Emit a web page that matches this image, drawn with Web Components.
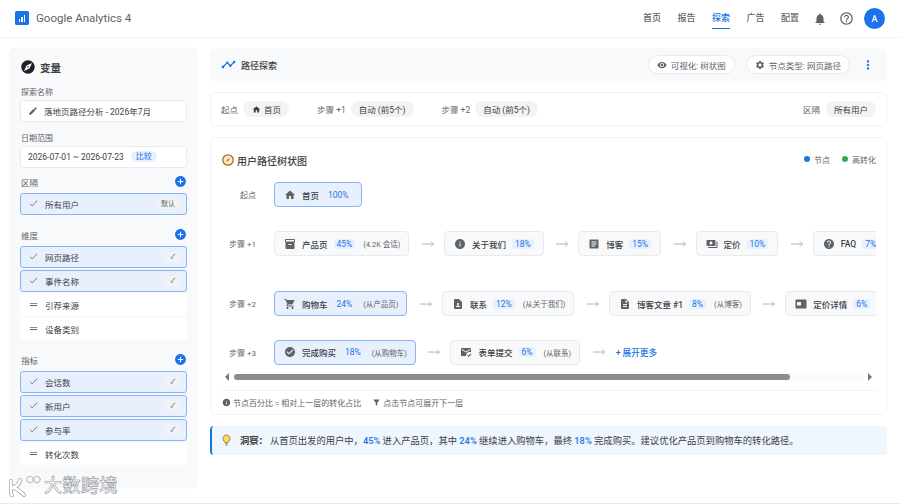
<!DOCTYPE html>
<html lang="zh">
<head>
<meta charset="utf-8">
<title>Google Analytics 4</title>
<style>
html, body { margin: 0; height: 100%; }
body {
    width: 900px; height: 504px; overflow: hidden; position: relative;
    background: #fff; color: #3c4043;
    font-family: Roboto, "Noto Sans CJK SC", sans-serif;
}
</style>
</head>
<body>
<ga-app>
    <ga-header></ga-header>
    <ga-sidebar>
        <ga-field label="探索名称" icon="edit">落地页路径分析 - 2026年7月</ga-field>
        <ga-field label="日期范围" tag="比较" style="margin-bottom:7px">2026-07-01 ~ 2026-07-23</ga-field>

        <ga-group label="区隔" add>
            <ga-chip on badge="默认">所有用户</ga-chip>
        </ga-group>
        <ga-group label="维度" add>
            <ga-chip on badge="✓">网页路径</ga-chip>
            <ga-chip on badge="✓">事件名称</ga-chip>
            <ga-chip>引荐来源</ga-chip>
            <ga-chip>设备类别</ga-chip>
        </ga-group>
        <ga-group label="指标" add>
            <ga-chip on badge="✓">会话数</ga-chip>
            <ga-chip on badge="✓">新用户</ga-chip>
            <ga-chip on badge="✓">参与率</ga-chip>
            <ga-chip>转化次数</ga-chip>
        </ga-group>
    </ga-sidebar>
    <ga-main>
        <ga-topbar></ga-topbar>
        <ga-filters></ga-filters>
        <ga-tree>
            <ga-row label="起点" gap="0">
                <ga-node on icon="home" pct="100%" plain>首页</ga-node>
            </ga-row>
            <ga-row label="步骤 +1" gap="24">
                <ga-node icon="inventory" pct="45%" sub="(4.2K 会话)">产品页</ga-node>
                <ga-arrow></ga-arrow>
                <ga-node icon="info" pct="18%">关于我们</ga-node>
                <ga-arrow></ga-arrow>
                <ga-node icon="article" pct="15%">博客</ga-node>
                <ga-arrow></ga-arrow>
                <ga-node icon="payments" pct="10%">定价</ga-node>
                <ga-arrow></ga-arrow>
                <ga-node icon="help" pct="7%">FAQ</ga-node>
            </ga-row>
            <ga-row label="步骤 +2" gap="35">
                <ga-node on icon="cart" pct="24%" sub="(从产品页)">购物车</ga-node>
                <ga-arrow></ga-arrow>
                <ga-node icon="contact" pct="12%" sub="(从关于我们)">联系</ga-node>
                <ga-arrow></ga-arrow>
                <ga-node icon="description" pct="8%" sub="(从博客)">博客文章 #1</ga-node>
                <ga-arrow></ga-arrow>
                <ga-node icon="video" pct="6%">定价详情</ga-node>
            </ga-row>
            <ga-row label="步骤 +3" gap="23.5">
                <ga-node on icon="check_circle" pct="18%" sub="(从购物车)">完成购买</ga-node>
                <ga-arrow></ga-arrow>
                <ga-node icon="mail" pct="6%" sub="(从联系)">表单提交</ga-node>
                <ga-arrow></ga-arrow>
                <a class="more" style="color:#1a73e8;font-size:8.6px;font-weight:500;margin-left:1px;white-space:nowrap">+ 展开更多</a>
            </ga-row>
        </ga-tree>
        <ga-insight></ga-insight>
    </ga-main>
</ga-app>
<ga-watermark></ga-watermark>

<script>
// material icon paths, 24x24
const ICONS = {
    home: 'M10 20v-6h4v6h5v-8h3L12 3 2 12h3v8z',
    edit: 'M3 17.25V21h3.75L17.81 9.94l-3.75-3.75L3 17.25zM20.71 7.04a1 1 0 0 0 0-1.41l-2.34-2.34a1 1 0 0 0-1.41 0l-1.83 1.83 3.75 3.75 1.83-1.83z',
    check: 'M9 16.17 4.83 12l-.9.9L9 18 20.5 6.5l-.9-.9z',
    drag: 'M20 9H4v2h16V9zM4 15h16v-2H4v2z',
    add_circle: 'M12 2C6.48 2 2 6.48 2 12s4.48 10 10 10 10-4.48 10-10S17.52 2 12 2zm5 11h-4v4h-2v-4H7v-2h4V7h2v4h4v2z',
    explore: 'M12 10.9c-.61 0-1.1.49-1.1 1.1s.49 1.1 1.1 1.1c.61 0 1.1-.49 1.1-1.1s-.49-1.1-1.1-1.1zM12 2C6.48 2 2 6.48 2 12s4.48 10 10 10 10-4.48 10-10S17.52 2 12 2zm2.19 12.19L6 18l3.81-8.19L18 6l-3.81 8.19z',
    timeline: 'M23 8c0 1.1-.9 2-2 2-.18 0-.35-.02-.51-.07l-3.56 3.55c.05.16.07.34.07.52 0 1.1-.9 2-2 2s-2-.9-2-2c0-.18.02-.36.07-.52l-2.55-2.55c-.16.05-.34.07-.52.07s-.36-.02-.52-.07l-4.55 4.56c.05.16.07.33.07.51 0 1.1-.9 2-2 2s-2-.9-2-2 .9-2 2-2c.18 0 .35.02.51.07l4.56-4.55C8.02 9.36 8 9.18 8 9c0-1.1.9-2 2-2s2 .9 2 2c0 .18-.02.36-.07.52l2.55 2.55c.16-.05.34-.07.52-.07s.36.02.52.07l3.55-3.56C19.02 8.35 19 8.18 19 8c0-1.1.9-2 2-2s2 .9 2 2z',
    eye: 'M12 4.5C7 4.5 2.73 7.61 1 12c1.73 4.39 6 7.5 11 7.5s9.27-3.11 11-7.5c-1.73-4.39-6-7.5-11-7.5zM12 17c-2.76 0-5-2.24-5-5s2.24-5 5-5 5 2.24 5 5-2.24 5-5 5zm0-8c-1.66 0-3 1.34-3 3s1.34 3 3 3 3-1.34 3-3-1.34-3-3-3z',
    settings: 'M19.14 12.94c.04-.3.06-.61.06-.94 0-.32-.02-.64-.07-.94l2.03-1.58a.49.49 0 0 0 .12-.61l-1.92-3.32a.488.488 0 0 0-.59-.22l-2.39.96c-.5-.38-1.03-.7-1.62-.94l-.36-2.54a.484.484 0 0 0-.48-.41h-3.84c-.24 0-.43.17-.47.41l-.36 2.54c-.59.24-1.13.57-1.62.94l-2.39-.96c-.22-.08-.47 0-.59.22L2.74 8.87c-.12.21-.08.47.12.61l2.03 1.58c-.05.3-.09.63-.09.94s.02.64.07.94l-2.03 1.58a.49.49 0 0 0-.12.61l1.92 3.32c.12.22.37.29.59.22l2.39-.96c.5.38 1.03.7 1.62.94l.36 2.54c.05.24.24.41.48.41h3.84c.24 0 .44-.17.47-.41l.36-2.54c.59-.24 1.13-.56 1.62-.94l2.39.96c.22.08.47 0 .59-.22l1.92-3.32c.12-.22.07-.47-.12-.61l-2.01-1.58zM12 15.6c-1.98 0-3.6-1.62-3.6-3.6s1.62-3.6 3.6-3.6 3.6 1.62 3.6 3.6-1.62 3.6-3.6 3.6z',
    more: 'M12 8c1.1 0 2-.9 2-2s-.9-2-2-2-2 .9-2 2 .9 2 2 2zm0 2c-1.1 0-2 .9-2 2s.9 2 2 2 2-.9 2-2-.9-2-2-2zm0 6c-1.1 0-2 .9-2 2s.9 2 2 2 2-.9 2-2-.9-2-2-2z',
    bell: 'M12 22c1.1 0 2-.9 2-2h-4c0 1.1.89 2 2 2zm6-6v-5c0-3.07-1.64-5.64-4.5-6.32V4c0-.83-.67-1.5-1.5-1.5s-1.5.67-1.5 1.5v.68C7.63 5.36 6 7.92 6 11v5l-2 2v1h16v-1l-2-2z',
    help_o: 'M11 18h2v-2h-2v2zm1-16C6.48 2 2 6.48 2 12s4.48 10 10 10 10-4.48 10-10S17.52 2 12 2zm0 18c-4.41 0-8-3.59-8-8s3.59-8 8-8 8 3.59 8 8-3.59 8-8 8zm0-14c-2.21 0-4 1.79-4 4h2c0-1.1.9-2 2-2s2 .9 2 2c0 2-3 1.75-3 5h2c0-2.25 3-2.5 3-5 0-2.21-1.79-4-4-4z',
    inventory: 'M20 2H4c-1 0-2 .9-2 2v3.01c0 .72.43 1.34 1 1.69V20c0 1.1 1.1 2 2 2h14c.9 0 2-.9 2-2V8.7c.57-.35 1-.97 1-1.69V4c0-1.1-1-2-2-2zm-5 12H9v-2h6v2zm5-7H4V4l16-.02V7z',
    info: 'M12 2C6.48 2 2 6.48 2 12s4.48 10 10 10 10-4.48 10-10S17.52 2 12 2zm1 15h-2v-6h2v6zm0-8h-2V7h2v2z',
    article: 'M19 3H5c-1.1 0-2 .9-2 2v14c0 1.1.9 2 2 2h14c1.1 0 2-.9 2-2V5c0-1.1-.9-2-2-2zm-5 14H7v-2h7v2zm3-4H7v-2h10v2zm0-4H7V7h10v2z',
    payments: 'M19 14V6c0-1.1-.9-2-2-2H3c-1.1 0-2 .9-2 2v8c0 1.1.9 2 2 2h14c1.1 0 2-.9 2-2zm-9-1c-1.66 0-3-1.34-3-3s1.34-3 3-3 3 1.34 3 3-1.34 3-3 3zm13-6v11c0 1.1-.9 2-2 2H4v-2h17V7h2z',
    help: 'M12 2C6.48 2 2 6.48 2 12s4.48 10 10 10 10-4.48 10-10S17.52 2 12 2zm1 17h-2v-2h2v2zm2.07-7.75-.9.92C13.45 12.9 13 13.5 13 15h-2v-.5c0-1.1.45-2.1 1.17-2.83l1.24-1.26c.37-.36.59-.86.59-1.41 0-1.1-.9-2-2-2s-2 .9-2 2H8c0-2.21 1.79-4 4-4s4 1.79 4 4c0 .88-.36 1.68-.93 2.25z',
    cart: 'M7 18c-1.1 0-1.99.9-1.99 2S5.9 22 7 22s2-.9 2-2-.9-2-2-2zM1 2v2h2l3.6 7.59-1.35 2.45c-.16.28-.25.61-.25.96 0 1.1.9 2 2 2h12v-2H7.42c-.14 0-.25-.11-.25-.25l.03-.12.9-1.63h7.45c.75 0 1.41-.41 1.75-1.03l3.58-6.49A1.003 1.003 0 0 0 20 4H5.21l-.94-2H1zm16 16c-1.1 0-1.99.9-1.99 2s.89 2 1.99 2 2-.9 2-2-.9-2-2-2z',
    contact: 'M14 2H6c-1.1 0-1.99.9-1.99 2L4 20c0 1.1.89 2 1.99 2H18c1.1 0 2-.9 2-2V8l-6-6zm-2 8c1.1 0 2 .9 2 2s-.9 2-2 2-2-.9-2-2 .9-2 2-2zm4 8H8v-.57c0-.81.48-1.53 1.22-1.85a6.95 6.95 0 0 1 5.56 0A2.01 2.01 0 0 1 16 17.43V18z',
    description: 'M14 2H6c-1.1 0-1.99.9-1.99 2L4 20c0 1.1.89 2 1.99 2H18c1.1 0 2-.9 2-2V8l-6-6zm2 16H8v-2h8v2zm0-4H8v-2h8v2zm-3-5V3.5L18.5 9H13z',
    video: 'M21 3H3c-1.1 0-2 .9-2 2v14c0 1.1.9 2 2 2h18c1.1 0 2-.9 2-2V5c0-1.1-.9-2-2-2zm-9 12H4V8h8v7z',
    check_circle: 'M12 2C6.48 2 2 6.48 2 12s4.48 10 10 10 10-4.48 10-10S17.52 2 12 2zm-2 15-5-5 1.41-1.41L10 14.17l7.59-7.59L19 8l-9 9z',
    mail: 'M12 19c0-3.87 3.13-7 7-7 1.08 0 2.09.25 3 .68V6c0-1.1-.9-2-2-2H4c-1.1 0-2 .9-2 2v12c0 1.1.9 2 2 2h8.08c-.05-.33-.08-.66-.08-1zM4 6l8 5 8-5v2l-8 5-8-5V6zm13.34 16-3.54-3.54 1.41-1.41 2.12 2.12 4.24-4.24L23 16.34 17.34 22z',
    filter: 'M4.25 5.61C6.27 8.2 10 13 10 13v6c0 .55.45 1 1 1h2c.55 0 1-.45 1-1v-6s3.72-4.8 5.74-7.39A.998.998 0 0 0 18.95 4H5.04c-.83 0-1.3.95-.79 1.61z'
};

function svg(name, size, color) {
    return `<svg width="${size}" height="${size}" viewBox="0 0 24 24" fill="${color}" style="display:block;flex:none"><path d="${ICONS[name]}"/></svg>`;
}

function define(tag, render) {
    customElements.define(tag, class extends HTMLElement {
        constructor() {
            super();
            this.attachShadow({ mode: 'open' });
        }
        connectedCallback() {
            this.shadowRoot.innerHTML = render(this);
        }
    });
}

define('ga-app', () => `
    <style>
    :host { display: grid; grid-template-columns: 187px 677px; grid-template-rows: 38px 440px; column-gap: 13px; row-gap: 10px; padding-left: 10px; width: 900px; height: 504px; box-sizing: border-box; border-bottom: 1px solid #e8eaed; align-content: start; }
    </style>
    <slot></slot>`);

define('ga-header', () => `
    <style>
    :host { grid-column: 1 / 3; margin-left: -10px; width: 900px; height: 38px; box-sizing: border-box; display: flex; align-items: center; padding: 0 15px; border-bottom: 1px solid #f1f3f4; }
    .logo { width: 14px; height: 14px; background: #1a73e8; border-radius: 1.5px; display: flex; align-items: flex-end; justify-content: center; gap: 1px; padding-bottom: 3px; box-sizing: border-box; margin-top: -1px; }
    .logo i { width: 1.5px; background: #fff; display: block; }
    .name { font-size: 11.5px; color: #5f6368; margin-left: 7px; flex: 1; margin-top: -1px; }
    nav { display: flex; gap: 16.5px; font-size: 9px; color: #5f6368; font-weight: 500; }
    nav a { height: 21px; line-height: 20px; box-sizing: border-box; }
    nav a.on { color: #1a73e8; border-bottom: 1px solid #1a73e8; }
    .tools { display: flex; align-items: center; margin-left: 14px; }
    .av { width: 21px; height: 21px; border-radius: 50%; background: #1a73e8; color: #fff; font-size: 9px; font-weight: 500; display: flex; align-items: center; justify-content: center; margin-left: 10px; }
    </style>
    <div class="logo"><i style="height:3px"></i><i style="height:5px"></i><i style="height:7px"></i></div>
    <div class="name">Google Analytics 4</div>
    <nav><a>首页</a><a>报告</a><a class="on">探索</a><a>广告</a><a>配置</a></nav>
    <div class="tools">${svg('bell', 14, '#5f6368')}<span style="width:12px"></span>${svg('help_o', 15, '#5f6368')}<div class="av">A</div></div>`);

define('ga-sidebar', () => `
    <style>
    :host { display: block; background: #f8f9fa; border-radius: 6px; box-shadow: 0 0 1px rgba(60,64,67,.2); padding: 11px 10px 0; box-sizing: border-box; height: 440px; }
    h2 { margin: 0 0 12px 0; font-size: 10.5px; font-weight: 700; color: #3c4043; display: flex; align-items: center; gap: 4px; height: 16px; }
    </style>
    <h2>${svg('explore', 16, '#202124')}变量</h2>
    <slot></slot>`);

define('ga-field', el => `
    <style>
    :host { display: block; margin-bottom: 10.5px; }
    label { display: block; font-size: 8px; color: #5f6368; line-height: 11px; margin-bottom: 2px; padding-left: 1px; }
    .box { height: 22px; box-sizing: border-box; background: #fff; border: 1px solid #e8eaed; border-radius: 3px; display: flex; align-items: center; padding: 0 7px; font-size: 8.5px; color: #3c4043; gap: 6px; }
    .tag { background: #e8f0fe; color: #1a73e8; font-size: 8px; border-radius: 6px; padding: 0 5px; line-height: 11px; margin-left: 1px; }
    </style>
    <label>${el.getAttribute('label')}</label>
    <div class="box">${el.hasAttribute('icon') ? svg(el.getAttribute('icon'), 10, '#5f6368') : ''}<span><slot></slot></span>${el.hasAttribute('tag') ? `<span class="tag">${el.getAttribute('tag')}</span>` : ''}</div>`);

define('ga-group', el => `
    <style>
    :host { display: flex; flex-direction: column; gap: 1.5px; margin-bottom: 12.5px; }
    .head { display: flex; align-items: center; justify-content: space-between; font-size: 8.5px; color: #5f6368; height: 14px; margin-bottom: 2.5px; padding-left: 1px; }
    </style>
    <div class="head">${el.getAttribute('label')}${svg('add_circle', 13, '#1a73e8')}</div>
    <slot></slot>`);

define('ga-chip', el => {
    let on = el.hasAttribute('on');
    let badge = el.getAttribute('badge');
    return `
    <style>
    :host { display: flex; align-items: center; height: 22.5px; box-sizing: border-box; border-radius: 3px; padding: 0 6px 0 7px; font-size: 8.5px; color: #3c4043;
        background: ${on ? '#e8f0fe' : '#fff'}; border: 1px solid ${on ? '#8ab4f8' : '#fff'}; }
    .t { margin-left: 6px; flex: 1; }
    .b { background: #f1f3f4; color: #5f6368; font-size: 7px; border-radius: 5px; padding: 0 5px; line-height: 10px; }
    </style>
    ${svg(on ? 'check' : 'drag', 11, '#5f6368')}<span class="t"><slot></slot></span>${badge ? `<span class="b">${badge}</span>` : ''}`;
});

define('ga-main', () => `
    <style>
    :host { display: flex; flex-direction: column; gap: 11px; }
    </style>
    <slot></slot>`);

define('ga-topbar', () => `
    <style>
    :host { display: flex; align-items: center; height: 33px; box-sizing: border-box; background: #f8f9fa; border-radius: 6px; padding: 0 11px; font-size: 9px; }
    b { font-weight: 500; color: #3c4043; margin: 1px 0 0 5px; flex: 1; }
    .pill { display: flex; align-items: center; gap: 4px; height: 19px; box-sizing: border-box; padding: 0 8px; background: #fff; border: 1px solid #e8eaed; border-radius: 10px; font-size: 8.5px; color: #5f6368; margin-right: 11px; }
    </style>
    ${svg('timeline', 15, '#1a73e8')}<b>路径探索</b>
    <div class="pill">${svg('eye', 10, '#5f6368')}可视化: 树状图</div>
    <div class="pill" style="margin-right:0">${svg('settings', 10, '#5f6368')}节点类型: 网页路径</div>
    <span style="margin-left:11px;margin-right:1px">${svg('more', 14, '#1a73e8')}</span>`);

define('ga-filters', () => `
    <style>
    :host { display: flex; align-items: center; height: 34px; box-sizing: border-box; background: #fff; border: 1px solid #f1f3f4; border-radius: 6px; padding: 0 10px; font-size: 8.5px; color: #5f6368; }
    .pill { display: flex; align-items: center; gap: 3px; height: 16px; padding: 0 8px; background: #f1f3f4; border-radius: 8px; color: #3c4043; margin-left: 5px; }
    .g { flex: 1; }
    </style>
    起点<div class="pill" style="padding-left:9px">${svg('home', 9, '#3c4043')}首页</div><span style="width:28px"></span>
    步骤 +1<div class="pill">自动 (前5个)</div><span style="width:28px"></span>
    步骤 +2<div class="pill">自动 (前5个)</div><span class="g"></span>
    区隔<div class="pill" style="margin-left:6px">所有用户</div>`);

define('ga-tree', () => `
    <style>
    :host { display: flex; flex-direction: column; height: 278px; box-sizing: border-box; background: #fff; border: 1px solid #f1f3f4; border-radius: 6px; padding: 0 10px 0 11px; }
    .top { display: flex; align-items: center; height: 44px; font-size: 10px; font-weight: 500; gap: 3px; }
    .top b { font-weight: 500; flex: 1; color: #3c4043; }
    .leg { display: flex; align-items: center; gap: 4px; font-size: 8px; color: #5f6368; font-weight: 400; margin-top: -2px; }
    .leg i { width: 6px; height: 6px; border-radius: 50%; display: block; }
    .rows { overflow: hidden; }
    .bar { display: flex; align-items: center; height: 8px; margin-top: 8px; padding: 0 4px 0 3px; }
    .tri { width: 0; height: 0; border: 4px solid transparent; }
    .track { flex: 1; margin: 0 5px; height: 100%; display: flex; align-items: center; background: #fafafa; }
    .thumb { width: 556px; height: 6px; border-radius: 3px; background: #8c8c8c; }
    .note { border-top: 1px solid #f1f3f4; margin-top: 9px; flex: 1; display: flex; align-items: center; gap: 2px; font-size: 8px; color: #5f6368; }
    </style>
    <div class="top"><svg width="12" height="12" viewBox="0 0 12 12" style="flex:none"><circle cx="6" cy="6" r="5.2" fill="#fbe8c4" stroke="#a56a1e" stroke-width="1.3"/><path d="M7.8 4.2 6.6 6.6 4.2 7.8 5.4 5.4z" fill="#c5491f"/></svg><b>用户路径树状图</b>
        <div class="leg"><i style="background:#1a73e8"></i>节点<span style="width:4px"></span><i style="background:#34a853"></i>高转化</div></div>
    <div class="rows"><slot></slot></div>
    <div class="bar"><span class="tri" style="border-right-color:#777;border-left:0"></span><div class="track"><div class="thumb"></div></div><span class="tri" style="border-left-color:#777;border-right:0"></span></div>
    <div class="note">${svg('info', 9, '#5f6368')}节点百分比 = 相对上一层的转化占比<span style="width:7px"></span>${svg('filter', 9, '#5f6368')}点击节点可展开下一层</div>`);

define('ga-row', el => `
    <style>
    :host { display: flex; align-items: center; height: 25px; margin-top: ${el.getAttribute('gap')}px; }
    .l { width: 34px; margin-right: 18px; flex: none; text-align: right; font-size: 8px; color: #5f6368; white-space: nowrap; }
    </style>
    <div class="l">${el.getAttribute('label')}</div><slot></slot>`);

define('ga-node', el => {
    let on = el.hasAttribute('on');
    let sub = el.getAttribute('sub');
    return `
    <style>
    :host { display: flex; flex: none; align-items: center; height: 25px; box-sizing: border-box; border-radius: 4px; padding: 0 ${sub ? 8 : 9}px 0 9px; white-space: nowrap;
        background: ${on ? '#e8f0fe' : '#f8f9fa'}; border: 1px solid ${on ? '#8ab4f8' : '#e8eaed'}; font-size: 8.5px; color: #3c4043; }
    b { font-weight: 500; margin-left: 6px; }
    .p { font-size: 8.5px; color: #1a73e8; margin-left: 6px; padding: 0 3px; border-radius: 3px; background: ${on ? 'transparent' : '#e8f0fe'}; }
    .s { font-size: 7.5px; color: #5f6368; margin-left: 8px; }
    </style>
    ${svg(el.getAttribute('icon'), 12, '#5f6368')}<b><slot></slot></b><span class="p">${el.getAttribute('pct')}</span>${sub ? `<span class="s">${sub}</span>` : ''}`;
});

define('ga-arrow', () => `
    <style>
    :host { display: block; flex: none; width: 12px; margin: 0 10px 0 12.5px; }
    </style>
    <svg width="12" height="8" viewBox="0 0 12 8" style="display:block" fill="none" stroke="#b0b4b8" stroke-width="1"><path d="M0 4h11.5M9 1.5 11.5 4 9 6.5"/></svg>`);

define('ga-insight', () => `
    <style>
    :host { display: flex; align-items: center; height: 29px; box-sizing: border-box; background: #f0f6fe; border-left: 2.5px solid #1a73e8; border-radius: 4px; padding: 0 9px 1px; font-size: 9.3px; color: #3c4043; white-space: nowrap; }
    b { font-weight: 700; margin: 0 2px 0 8px; }
    em { font-style: normal; color: #1a73e8; font-weight: 500; }
    </style>
    <svg width="11" height="12" viewBox="0 0 11 12" style="flex:none"><path d="M5.5 1a3.6 3.6 0 0 0-2.2 6.4c.5.4.7.9.7 1.4h3c0-.5.2-1 .7-1.4A3.6 3.6 0 0 0 5.5 1z" fill="#fdd663" stroke="#8a6d1b" stroke-width=".8"/><path d="M4.3 10h2.4M4.7 11.2h1.6" stroke="#5f6368" stroke-width=".8"/></svg>
    <b>洞察：</b><span>从首页出发的用户中，<em>45%</em> 进入产品页，其中 <em>24%</em> 继续进入购物车，最终 <em>18%</em> 完成购买。建议优化产品页到购物车的转化路径。</span>`);

define('ga-watermark', () => `
    <style>
    :host { position: absolute; left: 8px; top: 474px; display: flex; align-items: center; gap: 3px; }
    span { font-size: 18px; font-weight: 500; color: #fff; -webkit-text-stroke: .7px #9aa0a6; letter-spacing: .5px; line-height: 22px; }
    </style>
    <svg width="33" height="24" viewBox="0 0 33 24" fill="none" stroke-linecap="round"><g stroke="#a8abae" stroke-width="4"><path d="M3 7v13q0 1 1 1M4 14c4-1 7-3 8-8M6 14c3 1 7 4 10 7"/></g><g stroke="#fff" stroke-width="2.4"><path d="M3 7v13q0 1 1 1M4 14c4-1 7-3 8-8M6 14c3 1 7 4 10 7"/></g><g stroke="#b5b8bb" stroke-width="1"><circle cx="22" cy="5.5" r="3.3"/><circle cx="29" cy="5.5" r="3.3"/></g></svg>
    <span>大数跨境</span>`);
</script>
</body>
</html>
